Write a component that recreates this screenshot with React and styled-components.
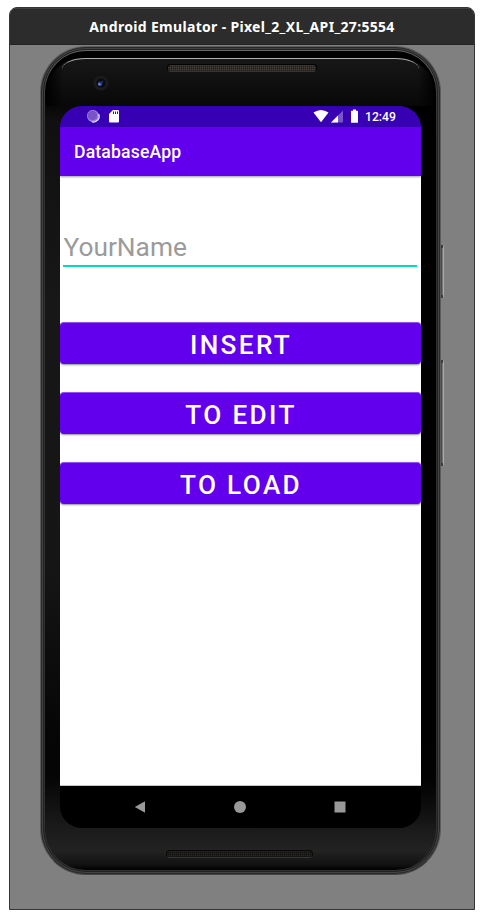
import React from "react";
import styled, { createGlobalStyle } from "styled-components";

const GlobalStyle = createGlobalStyle`
  * { box-sizing: border-box; }
  body { margin: 0; background: #fff; font-family: Roboto, sans-serif; }
`;

const Page = styled.div`
  width: 484px;
  height: 919px;
  padding: 7px 9px 9px;
  overflow: hidden;
`;

const EmulatorWindow = styled.main`
  width: 466px;
  height: 903px;
  border: 1px solid #353535;
  border-radius: 8px 8px 0 0;
  background: #808080;
  overflow: hidden;
`;

const TitleBar = styled.header`
  height: 37px;
  display: flex;
  align-items: center;
  justify-content: center;
  background: #2c2c2c;
  border-top: 1px solid #404040;
  border-bottom: 1px solid #222;
  color: #fff;
  font: 700 14px "Noto Sans", "Open Sans", sans-serif;
  letter-spacing: 0.32px;
  white-space: nowrap;
`;

const Phone = styled.section`
  position: relative;
  width: 401px;
  height: 829px;
  margin: 1px 0 0 30px;
  padding: 4px;
  border-radius: 46px;
  border: 1px solid #5b5b5b;
  border-bottom-color: #444;
  background: linear-gradient(#6a6a6a 0, #393939 50px, #303030 100px, #303030 780px, #333 100%);
  box-shadow: inset 0 0 0 1px #292929, inset 0 0 0 2px #424242, inset 0 0 0 3px #222;
`;

const Body = styled.div`
  height: 100%;
  padding-top: 7px;
  border-radius: 41px;
  overflow: hidden;
  background:
    linear-gradient(#000 0 640px, transparent 740px) 100% 42px / 50% 740px no-repeat,
    linear-gradient(#000 0, #000 42px, #101010 70px, #171717 250px, #151515 520px, #050505 690px, #050505 725px, #181818 770px, #222 800px, #111 814px, #000 100%);
`;

const TopBezel = styled.div`
  position: relative;
  height: 48px;
  margin: 0 1px;
  padding: 6px 0 0 0;
  display: grid;
  grid-template-columns: 121px 150px 1fr;
  align-items: start;
  border-radius: 36px 36px 0 0;
  background: linear-gradient(90deg, #000 0, transparent 17px, transparent 372px, #000 100%), linear-gradient(#171717, #080808);

  &::before {
    content: "";
    position: absolute;
    left: 16px;
    right: 16px;
    top: 0;
    height: 12px;
    border-top: 1.5px solid #b0b0b0;
    border-radius: 24px 24px 0 0 / 11px 11px 0 0;
  }
`;

const Camera = styled.svg`
  display: block;
  margin: 11px 0 0 47px;
  width: 16px;
  height: 16px;
`;

const Speaker = styled.div`
  width: ${(p) => p.$width}px;
  height: 8px;
  border: 1px solid ${(p) => (p.$dim ? "#080808" : "#020202")};
  border-bottom-color: #363636;
  border-radius: 4px;
  background:
    repeating-linear-gradient(90deg, transparent 0 1px, rgba(0, 0, 0, 0.3) 1px 2px),
    repeating-linear-gradient(${(p) => (p.$dim ? "#292622 0 1px, #1c1a18 1px 2px" : "#443e38 0 1px, #302c28 1px 2px")});
`;

const Screen = styled.div`
  width: 361px;
  height: 722px;
  margin-left: 15px;
  display: flex;
  flex-direction: column;
  border-radius: 22px;
  overflow: hidden;
  background: linear-gradient(#3700b3 0 50%, #000 50%);
`;

const StatusBar = styled.div`
  height: 21px;
  flex: none;
  background: #3700b3;
`;

const StatusArt = styled.svg`
  display: block;
  width: 361px;
  height: 21px;
`;

const AppBar = styled.div`
  position: relative;
  height: 49px;
  flex: none;
  padding: 1px 0 0 14px;
  display: flex;
  align-items: center;
  background: #6200ee;
  box-shadow: 0 1px 2px rgba(0, 0, 0, 0.38);
  color: #fff;
  font-size: 17.6px;
  font-weight: 500;
  letter-spacing: 0.18px;
`;

const Content = styled.form`
  flex: 1;
  display: flex;
  flex-direction: column;
  background: #fff;
  border-bottom: 1px solid #c4c4c4;
`;

const NameField = styled.div`
  height: 38px;
  margin: 53px 4px 55px 3px;
  padding: 3px 0 0 0.5px;
  border-bottom: 2px solid #03dac5;
  color: #9b9b9b;
  font-size: 26.3px;
  line-height: 31px;
`;

const ActionButton = styled.button`
  height: 42px;
  margin: 0 0 28px;
  padding: 3px 0 0 1px;
  flex: none;
  border: 0;
  border-top: 1px solid #8f55ee;
  border-radius: 4px;
  background: #6200ee;
  box-shadow: 0 1px 2px rgba(0, 0, 0, 0.45);
  color: #fff;
  font: 500 26.2px/38px Roboto, sans-serif;
  letter-spacing: 2.34px;
`;

const NavBar = styled.nav`
  height: 42px;
  flex: none;
  padding-right: 2px;
  display: grid;
  grid-template-columns: repeat(3, 100px);
  justify-content: center;
  align-items: center;
  justify-items: center;
  background: #000;
`;

const NavIcon = styled.svg`
  width: 12px;
  height: 12px;
  fill: #999;
`;

const BottomBezel = styled.div`
  padding: 22px 0 0 121px;
`;

const SideKey = styled.i`
  position: absolute;
  left: 400px;
  top: ${(p) => p.$top}px;
  width: 3px;
  height: ${(p) => p.$height}px;
  border-radius: 0 2px 2px 0;
  background:
    linear-gradient(#3a3a3a, #3a3a3a) 0 0 / 2px 3px no-repeat,
    linear-gradient(#3a3a3a, #3a3a3a) 0 100% / 2px 3px no-repeat,
    linear-gradient(90deg, #4b4949 0 1px, #777 1px 2px, #b1a5a5 2px 3px);
`;

const actions = ["INSERT", "TO EDIT", "TO LOAD"];

function StatusIcons() {
  return (
    <StatusArt viewBox="0 0 361 21">
      <circle cx="33" cy="10" r="6" fill="#9b80d9" />
      <circle cx="32.5" cy="9.5" r="5.1" fill="#7954c8" stroke="#a68bdd" strokeWidth="1" strokeDasharray="1 1" />
      <path d="M38.6 8a5.7 5.7 0 0 1-7 7.8" fill="none" stroke="#eee7ff" strokeWidth="1.2" />
      <path fill="#fff" fillRule="evenodd" d="M53 4h5q1 0 1 1v10.5q0 1-1 1h-8q-1 0-1-1V8zM53 5.5v2.5h1V5.5zm2 0v2.5h1V5.5zm2 0v2.5h1V5.5z" />
      <path fill="#fff" d="M253.5 6.5Q261 1.500 268.500 6.500L261 16.200z" />
      <path fill="#7954c8" d="M283 4.500v12h-12z" />
      <path fill="#fff" d="M278 9.500v7h-7z" />
      <path fill="#fff" d="M293 3.500h3v1.200h1.500q.5 0 .5.5v11q0 .5-.5.5h-6q-.5 0-.5-.5v-11q0-.5.5-.5h1.500z" />
      <text x="305" y="15" fill="#fff" fontFamily="Roboto, sans-serif" fontSize="12.2" fontWeight="500">12:49</text>
    </StatusArt>
  );
}

export default function App() {
  return (
    <Page>
      <GlobalStyle />
      <EmulatorWindow>
        <TitleBar>Android Emulator - Pixel_2_XL_API_27:5554</TitleBar>
        <Phone>
          <SideKey $top={198} $height={53} />
          <SideKey $top={313} $height={106} />
          <Body>
            <TopBezel>
              <Camera viewBox="0 0 16 16">
                <circle cx="8" cy="8" r="7.500" fill="#1b1b1b" />
                <circle cx="8" cy="8" r="4.600" fill="#080b13" />
                <circle cx="7" cy="8.800" r="2.400" fill="#263c78" />
                <circle cx="6.500" cy="9.200" r="1.200" fill="#6980ca" />
                <circle cx="9.500" cy="6.500" r=".7" fill="#344572" />
              </Camera>
              <Speaker $width={150} />
            </TopBezel>
            <Screen>
              <StatusBar><StatusIcons /></StatusBar>
              <AppBar>DatabaseApp</AppBar>
              <Content>
                <NameField>YourName</NameField>
                {actions.map((label) => (
                  <ActionButton type="button" key={label}>{label}</ActionButton>
                ))}
              </Content>
              <NavBar>
                <NavIcon viewBox="0 0 12 12"><path d="M.8 6 11 .2v11.600z" /></NavIcon>
                <NavIcon viewBox="0 0 12 12"><circle cx="6" cy="6" r="6" /></NavIcon>
                <NavIcon viewBox="0 0 12 12"><rect x=".5" y=".5" width="11" height="11" /></NavIcon>
              </NavBar>
            </Screen>
            <BottomBezel><Speaker $width={147} $dim /></BottomBezel>
          </Body>
        </Phone>
      </EmulatorWindow>
    </Page>
  );
}
